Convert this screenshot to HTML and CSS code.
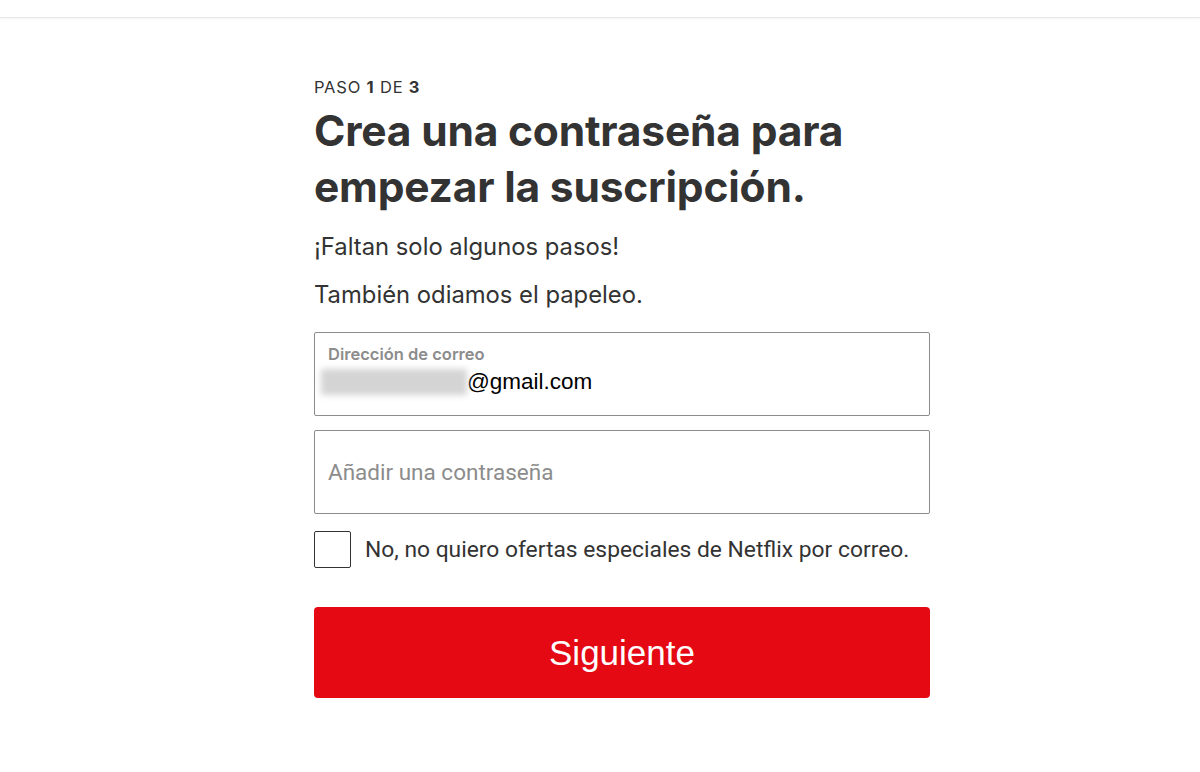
FILE: index.html
```html
<!DOCTYPE html>
<html lang="es">
  <head>
    <meta charset="utf-8">
    <title>Crea una contraseña</title>
    <link rel="stylesheet" href="styles.css">
  </head>
  <body>
    <div class="topbar"></div>
    <main class="form-wrap">
      <p class="step">PASO <b>1</b> DE <b>3</b></p>
      <h1 class="title">Crea una contraseña para empezar la suscripción.</h1>
      <p class="lead">¡Faltan solo algunos pasos!</p>
      <p class="lead">También odiamos el papeleo.</p>

      <div class="field filled">
        <span class="field-label">Dirección de correo</span>
        <span class="field-value"><span class="blur"></span>@gmail.com</span>
      </div>
      <div class="field">
        <span class="placeholder">Añadir una contraseña</span>
      </div>

      <label class="check-row">
        <span class="check-box"></span>
        <span class="check-text">No, no quiero ofertas especiales de Netflix por correo.</span>
      </label>

      <button class="next-btn">Siguiente</button>
    </main>
  </body>
</html>
```

FILE: styles.css
```css
* {
  margin: 0;
  padding: 0;
  box-sizing: border-box;
}

body {
  background: #fff;
  color: #333;
  font-family: Inter, "Noto Sans", sans-serif;
}

.topbar {
  height: 18px;
  border-bottom: 1px solid #e6e6e6;
  box-shadow: 0 1px 2px rgba(0, 0, 0, 0.04);
}

.form-wrap {
  width: 616px;
  margin-left: 314px;
  padding-top: 59px;
  display: flex;
  flex-direction: column;
}

.step {
  font-size: 16.5px;
  line-height: 20px;
  letter-spacing: 0.8px;
  color: #333;
}

.step b {
  font-weight: 700;
}

.title {
  margin-top: 6px;
  font-size: 42.5px;
  line-height: 56px;
  font-weight: 700;
  color: #333;
  letter-spacing: -0.2px;
  width: 580px;
}

.lead {
  font-size: 23.8px;
  line-height: 28px;
  margin-top: 18px;
  color: #333;
}

.lead + .lead {
  margin-top: 20px;
}

.field {
  margin-top: 23px;
  height: 84px;
  border: 1px solid #8c8c8c;
  border-radius: 2px;
  display: flex;
  flex-direction: column;
  justify-content: center;
  padding: 0 13px;
}

.field + .field {
  margin-top: 14px;
}

.field-label {
  font-size: 16.5px;
  font-weight: 600;
  color: #8c8c8c;
  line-height: 20px;
  margin-top: -8px;
}

.field-value {
  margin-top: 4px;
  font-family: "Liberation Sans", Arial, sans-serif;
  font-size: 22.5px;
  line-height: 28px;
  color: #000;
  display: flex;
  align-items: center;
}

.blur {
  display: inline-block;
  width: 146px;
  height: 26px;
  margin-left: -7px;
  background: #d4d4d4;
  filter: blur(3px);
}

.placeholder {
  font-family: Roboto, "Noto Sans", sans-serif;
  font-size: 22.5px;
  color: #8c8c8c;
}

.check-row {
  margin-top: 17px;
  display: flex;
  align-items: center;
  gap: 14px;
}

.check-box {
  width: 37px;
  height: 37px;
  border: 1px solid #333;
  border-radius: 2px;
}

.check-text {
  font-family: Roboto, "Noto Sans", sans-serif;
  font-size: 22.8px;
  color: #333;
}

.next-btn {
  margin-top: 39px;
  height: 91px;
  border: 0;
  border-radius: 4px;
  background: #e50914;
  color: #fff;
  font-family: "Liberation Sans", Arial, sans-serif;
  font-size: 35px;
}
```
